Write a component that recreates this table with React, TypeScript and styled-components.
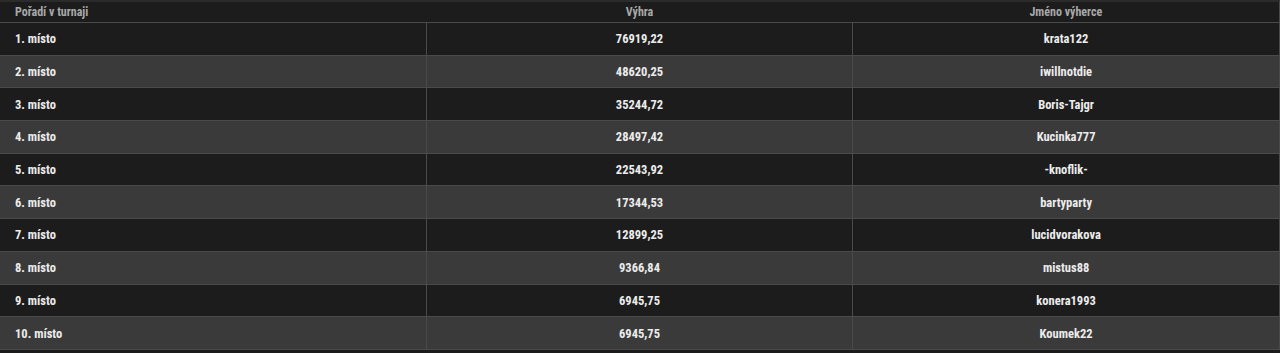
import React from 'react';
import styled, { createGlobalStyle } from 'styled-components';

const GlobalStyle = createGlobalStyle`
  html, body {
    margin: 0;
    padding: 0;
    background-color: #1b1b1b;
  }
  body {
    font-family: "Roboto Condensed", "Liberation Sans Narrow", "DejaVu Sans Condensed", Roboto, sans-serif;
    font-stretch: condensed;
  }
`;

const TableWrap = styled.div`
  width: 1279px;
  border-top: 2px solid #2b2b2b;
  border-right: 1px solid #4a4a4a;
  background-color: #1c1c1c;
`;

const Table = styled.table`
  width: 100%;
  border-collapse: collapse;
  table-layout: fixed;
`;

const HeadCell = styled.th<{ $align?: string }>`
  height: 19px;
  padding: 0 15px 1px;
  font-size: 12px;
  font-weight: 700;
  color: #a8a8a8;
  text-align: ${(p) => p.$align || 'center'};
  border-bottom: 1px solid #4a4a4a;
  background-color: #1c1c1c;
`;

const Row = styled.tr<{ $odd: boolean }>`
  background-color: ${(p) => (p.$odd ? '#3a3a3a' : '#1c1c1c')};
  border-bottom: 1px solid #4a4a4a;
`;

const Cell = styled.td<{ $align?: string }>`
  height: 31.7px;
  padding: 0 15px;
  font-size: 12.5px;
  font-weight: 700;
  color: #ececec;
  text-align: ${(p) => p.$align || 'center'};
  border-left: 1px solid #4a4a4a;

  &:first-child {
    border-left: none;
  }
`;

interface Winner {
  place: string;
  prize: string;
  name: string;
}

const winners: Winner[] = [
  { place: '1. místo', prize: '76919,22', name: 'krata122' },
  { place: '2. místo', prize: '48620,25', name: 'iwillnotdie' },
  { place: '3. místo', prize: '35244,72', name: 'Boris-Tajgr' },
  { place: '4. místo', prize: '28497,42', name: 'Kucinka777' },
  { place: '5. místo', prize: '22543,92', name: '-knoflik-' },
  { place: '6. místo', prize: '17344,53', name: 'bartyparty' },
  { place: '7. místo', prize: '12899,25', name: 'lucidvorakova' },
  { place: '8. místo', prize: '9366,84', name: 'mistus88' },
  { place: '9. místo', prize: '6945,75', name: 'konera1993' },
  { place: '10. místo', prize: '6945,75', name: 'Koumek22' },
];

const App: React.FC = () => {
  return (
    <>
      <GlobalStyle />
      <TableWrap>
        <Table>
          <thead>
            <tr>
              <HeadCell $align="left">Pořadí v turnaji</HeadCell>
              <HeadCell>Výhra</HeadCell>
              <HeadCell>Jméno výherce</HeadCell>
            </tr>
          </thead>
          <tbody>
            {winners.map((w, i) => (
              <Row key={w.place} $odd={i % 2 === 1}>
                <Cell $align="left">{w.place}</Cell>
                <Cell>{w.prize}</Cell>
                <Cell>{w.name}</Cell>
              </Row>
            ))}
          </tbody>
        </Table>
      </TableWrap>
    </>
  );
};

export default App;
